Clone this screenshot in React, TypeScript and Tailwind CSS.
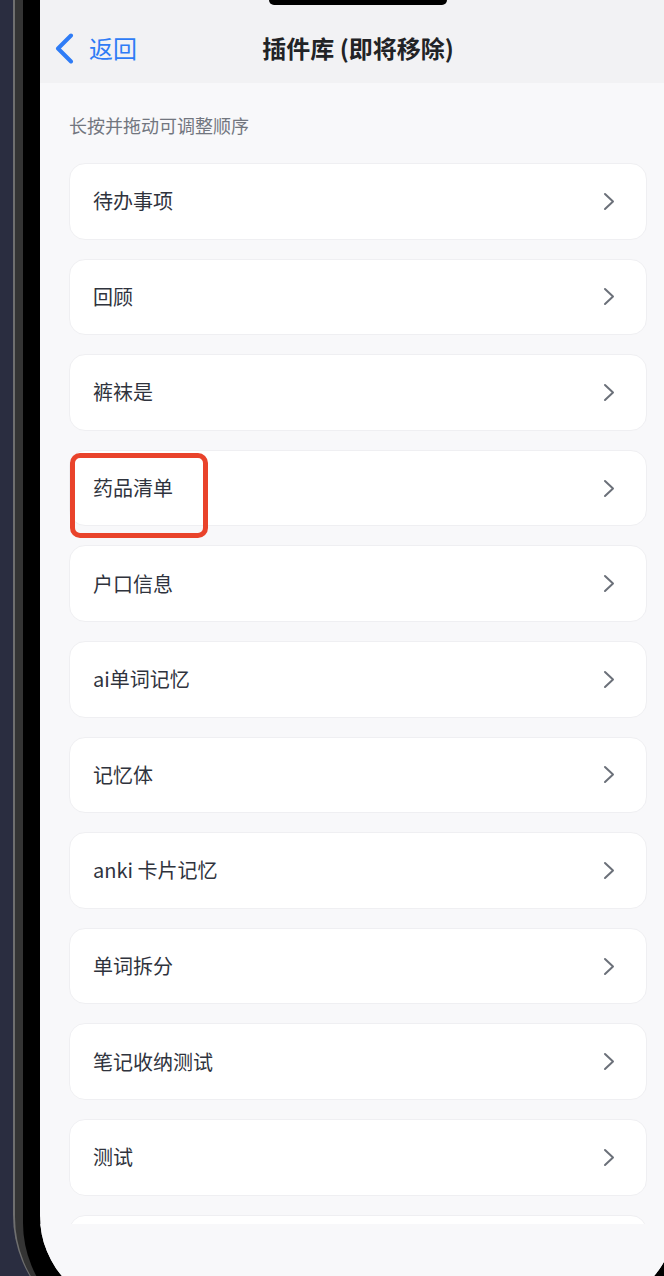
const plugins = [
  "待办事项",
  "回顾",
  "裤袜是",
  "药品清单",
  "户口信息",
  "ai单词记忆",
  "记忆体",
  "anki 卡片记忆",
  "单词拆分",
  "笔记收纳测试",
  "测试",
  "",
];

function Chevron() {
  return (
    <svg width="12" height="19" viewBox="0 0 12 19" fill="none">
      <polyline
        points="2,2 10,9.5 2,17"
        stroke="#6b7079"
        strokeWidth="2"
        strokeLinecap="round"
        strokeLinejoin="round"
      />
    </svg>
  );
}

function PluginRow({ name, marked }: { name: string; marked?: boolean }) {
  return (
    <div className="relative flex h-[76.6px] shrink-0 items-center justify-between rounded-[16px] border border-[#efeff2] bg-white pl-[23px] pr-[31px]">
      <span className="text-[20px] leading-[28px] text-[#2f333d]">{name}</span>
      <Chevron />
      {marked && (
        <div className="absolute left-0 top-[2px] h-[85px] w-[138px] rounded-[10px] border-[5px] border-[#e9432b]" />
      )}
    </div>
  );
}

export default function App() {
  return (
    <div className="flex h-[1276px] w-[664px] overflow-hidden bg-[#2a2d40] pl-[13px] font-['Noto_Sans_CJK_SC','Noto_Sans',sans-serif]">
      {/* device frame */}
      <div className="-mt-[60px] h-[1395px] w-[720px] shrink-0 rounded-bl-[120px] bg-[#6f6f6f] pl-[1.5px]">
        <div className="h-full rounded-bl-[118px] bg-[#343434] pl-[8.5px]">
          <div className="h-full rounded-bl-[112px] bg-black pb-[26px] pl-[17px] pt-[60px]">
            {/* screen */}
            <div className="flex h-full w-[636px] flex-col overflow-hidden rounded-b-[93px] bg-[#f8f8fa]">
              <div className="relative flex h-[83px] shrink-0 items-center bg-[#f2f2f4] pt-[13px]">
                <div className="absolute left-1/2 top-0 h-[5px] w-[178px] -translate-x-1/2 rounded-b-[20px] bg-black" />
                <div className="flex items-center pl-[15px] text-[#2f7cf6]">
                  <svg width="19" height="31" viewBox="0 0 19 31" fill="none">
                    <polyline
                      points="16,2.5 3,15.5 16,28.5"
                      stroke="#2f7cf6"
                      strokeWidth="4"
                      strokeLinecap="round"
                      strokeLinejoin="round"
                    />
                  </svg>
                  <span className="ml-[15px] text-[24px] leading-[32px]">返回</span>
                </div>
                <h1 className="absolute left-0 right-0 top-[13px] flex h-[70px] items-center justify-center text-[24px] font-bold text-[#222326]">
                  插件库 (即将移除)
                </h1>
              </div>

              <div className="flex h-[1141px] shrink-0 flex-col overflow-hidden px-[29px] pt-[30px]">
                <p className="mb-[26px] pl-[-1px] text-[18px] leading-[24px] text-[#72767f]">
                  长按并拖动可调整顺序
                </p>
                <div className="flex flex-col gap-[19px]">
                  {plugins.map((name, i) => (
                    <PluginRow key={i} name={name} marked={name === "药品清单"} />
                  ))}
                </div>
              </div>
              <div className="flex-1 bg-[#f8f8fa]" />
            </div>
          </div>
        </div>
      </div>
    </div>
  );
}
